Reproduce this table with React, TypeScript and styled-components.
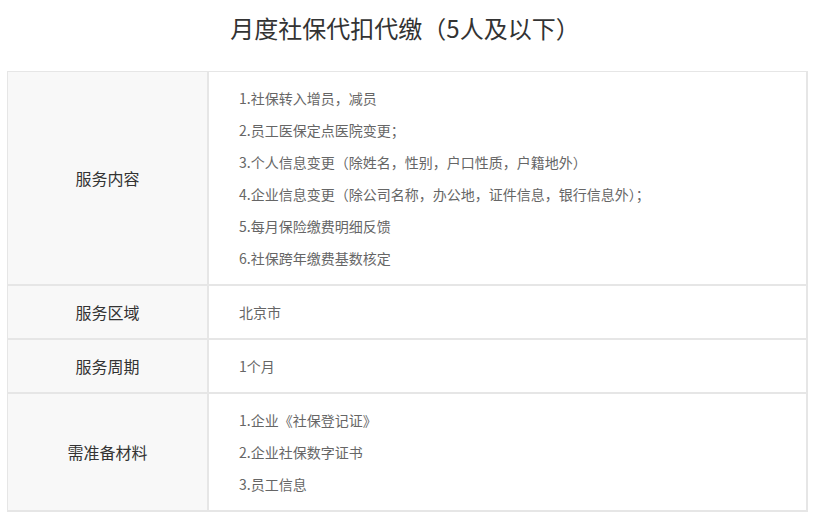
import React from "react"
import styled, { createGlobalStyle } from "styled-components"

const GlobalStyle = createGlobalStyle`
  html, body {
    margin: 0;
    padding: 0;
    background: #fff;
  }
  body {
    font-family: "Microsoft YaHei", "Noto Sans CJK SC", "Noto Sans", sans-serif;
  }
`

type Row = {
  label: string
  items: string[]
}

const rows: Row[] = [
  {
    label: "服务内容",
    items: [
      "1.社保转入增员，减员",
      "2.员工医保定点医院变更；",
      "3.个人信息变更（除姓名，性别，户口性质，户籍地外）",
      "4.企业信息变更（除公司名称，办公地，证件信息，银行信息外）；",
      "5.每月保险缴费明细反馈",
      "6.社保跨年缴费基数核定"
    ]
  },
  { label: "服务区域", items: ["北京市"] },
  { label: "服务周期", items: ["1个月"] },
  {
    label: "需准备材料",
    items: ["1.企业《社保登记证》", "2.企业社保数字证书", "3.员工信息"]
  }
]

const Page = styled.div`
  width: 820px;
  padding-bottom: 10px;
`

const Title = styled.h2`
  margin: 0;
  padding: 10px 10px 0 0;
  height: 71px;
  box-sizing: border-box;
  line-height: 36px;
  font-size: 24px;
  font-weight: normal;
  color: #333;
  text-align: center;
`

const Table = styled.div`
  width: 801px;
  margin-left: 7px;
  box-sizing: border-box;
  border-top: 1px solid #e6e6e6;
  border-left: 1px solid #e6e6e6;
`

const TableRow = styled.div`
  display: grid;
  grid-template-columns: 201px 1fr;
`

const Label = styled.div`
  display: flex;
  align-items: center;
  justify-content: center;
  background: #f8f8f8;
  border-right: 2px solid #e6e6e6;
  border-bottom: 2px solid #e6e6e6;
  font-size: 16px;
  color: #333;
`

const Content = styled.ul`
  margin: 0;
  list-style: none;
  padding: 10px 0 10px 30px;
  border-right: 2px solid #e6e6e6;
  border-bottom: 2px solid #e6e6e6;
`

const Item = styled.li`
  font-size: 14px;
  line-height: 32px;
  color: #666;
  white-space: nowrap;
`

export default function App() {
  return (
    <Page>
      <GlobalStyle />
      <Title>月度社保代扣代缴（5人及以下）</Title>
      <Table>
        {rows.map((row) => (
          <TableRow key={row.label}>
            <Label>{row.label}</Label>
            <Content>
              {row.items.map((item) => (
                <Item key={item}>{item}</Item>
              ))}
            </Content>
          </TableRow>
        ))}
      </Table>
    </Page>
  )
}
